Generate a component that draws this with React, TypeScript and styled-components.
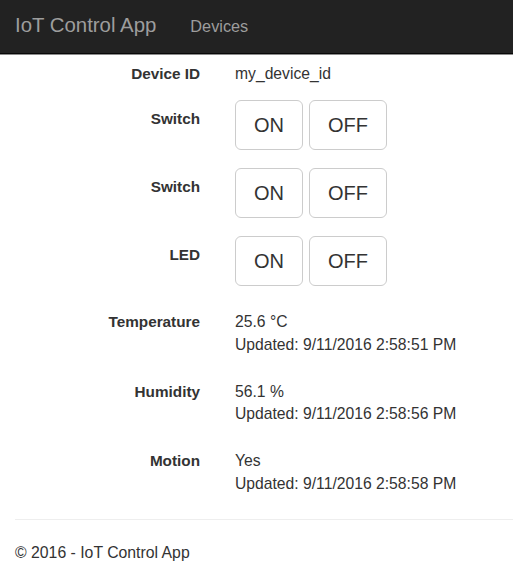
import React from "react";
import styled, { createGlobalStyle } from "styled-components";

const GlobalStyle = createGlobalStyle`
  html, body { margin: 0; padding: 0; background: #fff; }
  body {
    font-family: "Liberation Sans", Arial, Helvetica, sans-serif;
    color: #333;
    font-size: 15.7px;
    line-height: 22.25px;
  }
  * { box-sizing: border-box; }
`;

const Navbar = styled.nav`
  height: 54px;
  background: #222;
  border-bottom: 1px solid #080808;
  box-shadow: 0 1px 0 rgba(0, 0, 0, 0.45);
  display: flex;
  align-items: center;
  padding: 0 0 3px 15px;
  gap: 34px;
`;

const Brand = styled.a`
  font-size: 20.4px;
  line-height: 24px;
  color: #9d9d9d;
  text-decoration: none;
`;

const NavLink = styled.a`
  font-size: 16.3px;
  line-height: 20px;
  color: #9d9d9d;
  text-decoration: none;
  padding-top: 2px;
`;

const Main = styled.main`
  padding: 9px 15px 0 15px;
`;

const Row = styled.div<{ $spacing: number }>`
  display: grid;
  grid-template-columns: 185px 1fr;
  column-gap: 35px;
  margin-bottom: ${(p) => p.$spacing}px;
`;

const Label = styled.div<{ $offset?: number }>`
  text-align: right;
  font-weight: bold;
  font-size: 15.3px;
  padding-top: ${(p) => p.$offset ?? 0}px;
`;

const Value = styled.div`
  font-size: 15.7px;
`;

const ButtonGroup = styled.div`
  display: flex;
  gap: 6px;
`;

const ToggleButton = styled.button`
  height: 50px;
  padding: 0 18px;
  background: #fff;
  color: #333;
  border: 1px solid #ccc;
  border-radius: 6px;
  font-family: "Liberation Sans", Arial, Helvetica, sans-serif;
  font-size: 20px;
  line-height: 28px;
  cursor: pointer;
`;

const Rule = styled.hr`
  margin: 24px 0 0 15px;
  border: 0;
  border-top: 1px solid #eee;
`;

const Footer = styled.footer`
  padding: 22px 15px 0 15px;
  font-size: 15.8px;
`;

type SensorProps = { label: string; value: string; updated: string; spacing: number };

const SensorRow = ({ label, value, updated, spacing }: SensorProps) => (
  <Row $spacing={spacing}>
    <Label>{label}</Label>
    <Value>
      <div>{value}</div>
      <div>Updated: {updated}</div>
    </Value>
  </Row>
);

const ControlRow = ({ label, spacing }: { label: string; spacing: number }) => (
  <Row $spacing={spacing}>
    <Label $offset={8}>{label}</Label>
    <ButtonGroup>
      <ToggleButton>ON</ToggleButton>
      <ToggleButton>OFF</ToggleButton>
    </ButtonGroup>
  </Row>
);

export default function App() {
  return (
    <>
      <GlobalStyle />
      <Navbar>
        <Brand href="#">IoT Control App</Brand>
        <NavLink href="#">Devices</NavLink>
      </Navbar>
      <Main>
        <Row $spacing={15}>
          <Label>Device ID</Label>
          <Value>my_device_id</Value>
        </Row>
        <ControlRow label="Switch" spacing={18} />
        <ControlRow label="Switch" spacing={18} />
        <ControlRow label="LED" spacing={25} />
        <SensorRow label="Temperature" value="25.6 °C" updated="9/11/2016 2:58:51 PM" spacing={25} />
        <SensorRow label="Humidity" value="56.1 %" updated="9/11/2016 2:58:56 PM" spacing={25} />
        <SensorRow label="Motion" value="Yes" updated="9/11/2016 2:58:58 PM" spacing={0} />
      </Main>
      <Rule />
      <Footer>© 2016 - IoT Control App</Footer>
    </>
  );
}
